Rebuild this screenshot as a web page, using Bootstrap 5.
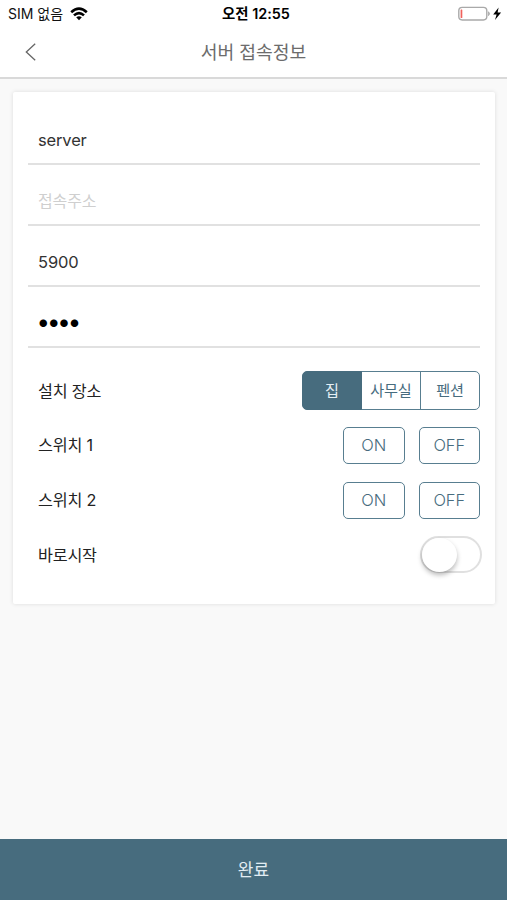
<!DOCTYPE html>
<html lang="ko">
<head>
<meta charset="utf-8">
<meta name="viewport" content="width=device-width, initial-scale=1">
<title>서버 접속정보</title>
<link href="https://cdn.jsdelivr.net/npm/bootstrap@5.3.0/dist/css/bootstrap.min.css" rel="stylesheet">
<style>
  :root { --teal: #476c7e; }
  body { font-family: Inter, "Noto Sans CJK KR", sans-serif; background: #f9f9f9; height: 900px; overflow: hidden; color: #222; }
  .statusbar { height: 27px; font-size: 14px; padding: 0 5px 0 8px; line-height: 26px; color: #111; letter-spacing: 0; }
  .statusbar .clock { font-size: 14.4px; font-weight: 600; color: #000; padding-left: 2px; }
  .side { flex: 1 1 0; }
  .titlebar { height: 52px; border-bottom: 2px solid #d9d9d9; padding: 0 25px; }
  .titlebar h1 { font-size: 18.2px; font-weight: 400; color: #6c6c6c; line-height: 51px; letter-spacing: 0; }
  .panel { margin: 13px 12px 0 13px; height: 512px; padding: 12px 15px 0; border-radius: 2px; box-shadow: 0 0 4px rgba(0,0,0,.12); }
  .field.form-control { height: 61.1px; border: 0; border-bottom: 2px solid #e1e1e1; border-radius: 0; padding: 12px 10px 0; font-size: 16.5px; letter-spacing: -.15px; color: #333; background: transparent; box-shadow: none; }
  .field.form-control::placeholder { color: #cfcfcf; font-size: 16px; letter-spacing: -.1px; }
  .field.dots.form-control { color: #000; font-size: 24px; letter-spacing: -3.1px; padding: 9px 8.5px 0; }
  .setting { padding-left: 10px; height: 54.7px; font-size: 16.2px; letter-spacing: -.2px; }
  .settings { padding-top: 15.1px; }
  .btn-line { --bs-btn-color: var(--teal); --bs-btn-border-color: #587e90; --bs-btn-active-bg: var(--teal); --bs-btn-active-color: #e4eff5; --bs-btn-active-border-color: var(--teal); --bs-btn-border-radius: 5px; --bs-btn-border-width: 1.5px; --bs-btn-padding-x: 0; --bs-btn-padding-y: 0; }
  .places .btn-line { width: 60px; height: 39px; font-size: 15.2px; letter-spacing: -.2px; padding-top: 2px; }
  .onoff .btn-line { width: 61.5px; height: 37px; font-size: 16.5px; font-weight: 300; letter-spacing: -.1px; }
  .onoff { gap: 14px; }
  .track { width: 62px; height: 37px; border: 2px solid #e0e0e0; border-radius: 19px; margin-right: -2px; }
  .knob { width: 35px; height: 34px; margin-top: -.5px; border-radius: 50%; background: #fff; box-shadow: 0 3px 5px rgba(0,0,0,.28); }
  .submit.btn { height: 61px; border: 0; border-radius: 0; background: var(--teal); color: #e2edf3; font-size: 17px; padding-top: 8px; }
</style>
</head>
<body class="d-flex flex-column">
  <header class="bg-white">
    <div class="statusbar d-flex align-items-center">
      <div class="side d-flex align-items-center"><span>SIM 없음</span>
        <svg width="18" height="14" style="margin-left:7px" viewBox="0 0 18 14" fill="none" stroke="#000" stroke-width="2.6"><path d="M1.2 5.2Q9-1.8 16.8 5.2M4 8.4Q9 3.8 14 8.4"/><path d="M6.2 10.3Q9 8 11.8 10.3L9 13.2Z" fill="#000" stroke="none"/></svg>
      </div>
      <div class="clock">오전 12:55</div>
      <div class="side d-flex justify-content-end align-items-center">
        <svg width="44" height="16" viewBox="0 0 44 16"><rect x=".8" y="1.4" width="28" height="12.6" rx="3.4" fill="#fff" stroke="#a9a9a9" stroke-width="1.4"/><path d="M30.5 5.7Q32.6 7.7 30.5 9.7Z" fill="#a0a0a0" stroke="#a0a0a0" stroke-width=".6"/><rect x="2.6" y="3.6" width="1.7" height="8.4" rx=".5" fill="#f0625c"/><path d="M40.6 1.4L35.2 8.4H38.6L37 14L43.1 6.6H39.6Z" fill="#000"/></svg>
      </div>
    </div>
    <div class="titlebar d-flex">
      <div class="side d-flex align-items-center"><svg width="12" height="18" viewBox="0 0 12 18" fill="none" stroke="#666" stroke-width="1.3"><path d="M10.2.8L1.3 9L10.2 17.2"/></svg></div>
      <h1 class="m-0">서버 접속정보</h1>
      <div class="side"></div>
    </div>
  </header>
  <main class="panel bg-white">
    <input class="form-control field" type="text" value="server">
    <input class="form-control field" type="text" placeholder="접속주소">
    <input class="form-control field" type="text" value="5900">
    <input class="form-control field dots" type="password" value="1234">
    <div class="settings">
      <div class="setting d-flex align-items-center justify-content-between"><span>설치 장소</span>
        <div class="btn-group places"><button class="btn btn-line active">집</button><button class="btn btn-line">사무실</button><button class="btn btn-line">펜션</button></div>
      </div>
      <div class="setting d-flex align-items-center justify-content-between"><span>스위치 1</span>
        <div class="d-flex onoff"><button class="btn btn-line">ON</button><button class="btn btn-line">OFF</button></div>
      </div>
      <div class="setting d-flex align-items-center justify-content-between"><span>스위치 2</span>
        <div class="d-flex onoff"><button class="btn btn-line">ON</button><button class="btn btn-line">OFF</button></div>
      </div>
      <div class="setting d-flex align-items-center justify-content-between"><span>바로시작</span>
        <div class="track" role="switch" aria-checked="false"><div class="knob"></div></div>
      </div>
    </div>
  </main>
  <button class="btn submit w-100 mt-auto">완료</button>
<script src="https://cdn.jsdelivr.net/npm/bootstrap@5.3.0/dist/js/bootstrap.bundle.min.js"></script>
</body>
</html>
